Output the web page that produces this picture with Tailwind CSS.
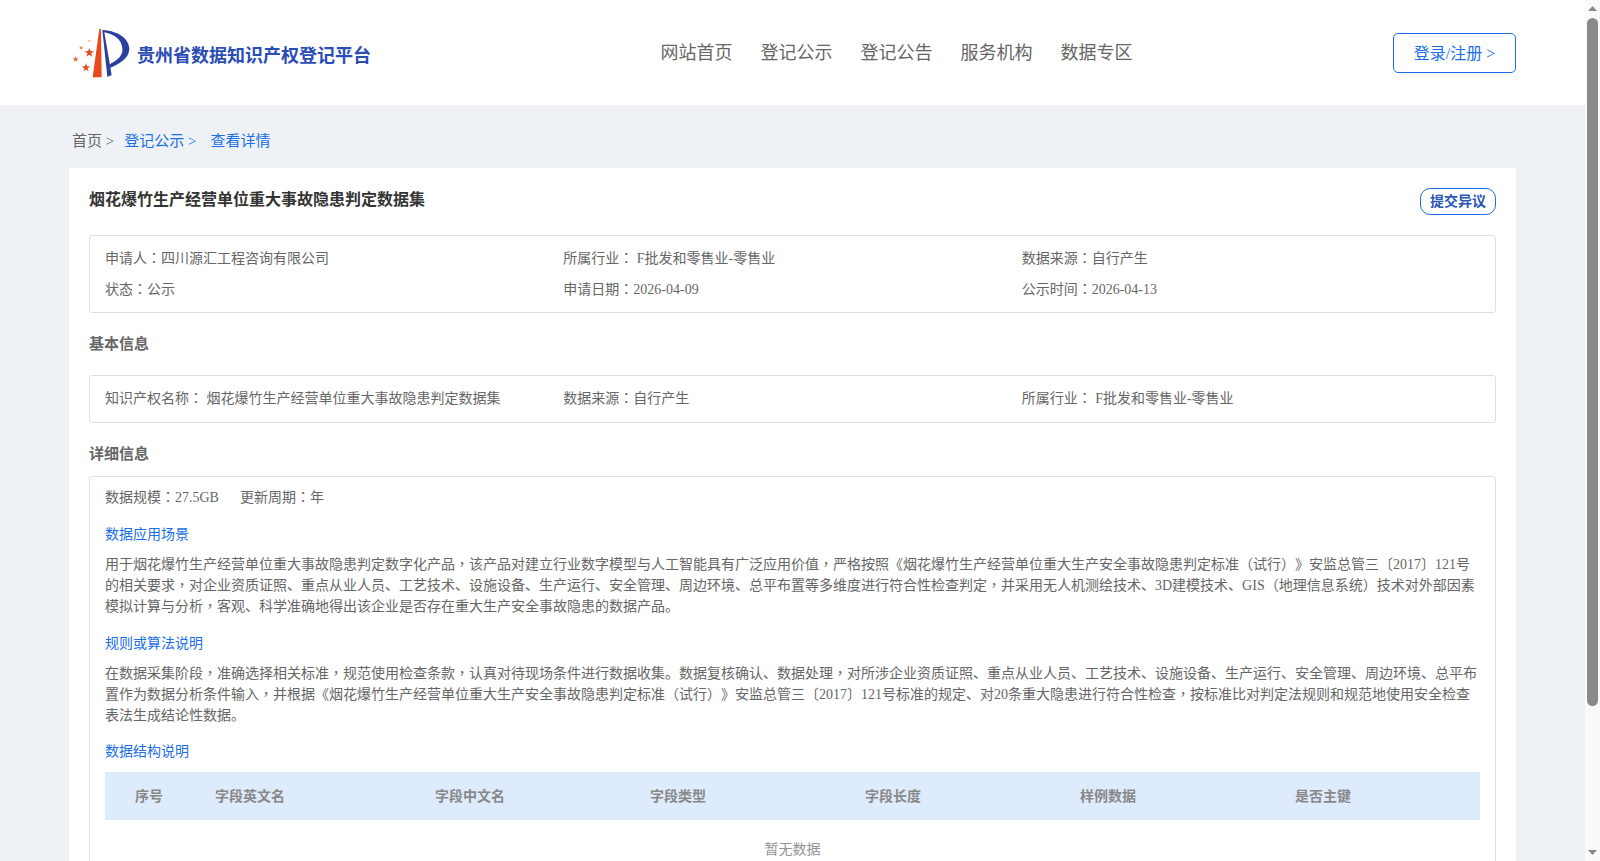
<!DOCTYPE html>
<html lang="zh-CN">
<head>
  <meta charset="UTF-8" />
  <meta name="viewport" content="width=device-width, initial-scale=1.0"/>
  <title>烟花爆竹生产经营单位重大事故隐患判定数据集</title>
  <script src="https://cdn.jsdelivr.net/npm/@tailwindcss/browser@4"></script>
</head>
<body class="h-screen overflow-hidden flex bg-white text-[14px] text-[#666] font-['Liberation_Serif','Noto_Sans_CJK_SC',serif] [text-spacing-trim:space-all]">

  <div class="flex-1 min-w-0 h-full overflow-hidden bg-[#eef2f6]">
    <!-- 顶部导航 -->
    <header class="h-[105px] bg-white flex items-center justify-between pl-[70px] pr-[69px]">
      <a class="flex items-center w-[302px]">
        <svg class="w-[65px] h-[55px] shrink-0" viewBox="0 0 195 165">
          <polygon points="68,157 88,12 93,12 95,157" fill="#e8491c"/>
          <path d="M97 15 C150 18 178 45 178 72 C178 100 145 118 118 130 L117 119 C145 105 160 90 157 70 C155 45 135 28 103 22 L125 150 L112 156 Z" fill="#2a3f9e"/>
          <polygon points="58,68 61.5,78.1 72.3,78.4 63.7,84.9 66.8,95.1 58,89 49.2,95.1 52.3,84.9 43.7,78.4 54.5,78.1" fill="#e8491c"/>
          <polygon points="48,115 51.1,123.8 60.4,124 52.9,129.6 55.6,138.5 48,133.2 40.4,138.5 43.1,129.6 35.6,124 45,123.8" fill="#e8491c"/>
          <polygon points="17,94 19.1,100.1 25.6,100.2 20.4,104.1 22.3,110.3 17,106.6 11.7,110.3 13.6,104.1 8.4,100.2 14.9,100.1" fill="#ee5a2c"/>
          <circle cx="33" cy="68" r="4.5" fill="#ee8a60"/>
          <circle cx="58" cy="47" r="2.8" fill="#f0a080"/>
        </svg>
        <span class="ml-[2px] pt-[8px] text-[18px] font-bold text-[#2a4db5] whitespace-nowrap">贵州省数据知识产权登记平台</span>
      </a>
      <nav class="flex gap-[28px] text-[18px] text-[#666] ml-[28px] mt-[1px]">
        <a>网站首页</a><a>登记公示</a><a>登记公告</a><a>服务机构</a><a>数据专区</a>
      </nav>
      <a class="w-[123px] h-[40px] pt-[2px] flex items-center justify-center border border-[#1a6fe8] rounded-[5px] text-[16px] text-[#1a6fe8] bg-white">登录/注册 &gt;</a>
    </header>

    <main class="px-[69px]">
      <!-- 面包屑 -->
      <div class="h-[63px] flex items-center text-[15px] pl-[3px] pt-[9px]">
        <span class="text-[#666]">首页 &gt;</span>
        <span class="ml-[10px] text-[#1a6fe8]">登记公示 &gt;</span>
        <span class="ml-[14px] text-[#1a6fe8]">查看详情</span>
      </div>

      <section class="bg-white px-[20px] pt-[20px] pb-[40px]">
        <div class="flex items-start justify-between h-[47px]">
          <h1 class="text-[16px] leading-[24px] font-bold text-[#333]">烟花爆竹生产经营单位重大事故隐患判定数据集</h1>
          <button class="w-[76px] h-[27px] rounded-[10px] border border-[#1a6fe8] text-[14px] font-bold text-[#2a56b5] leading-none">提交异议</button>
        </div>

        <div class="border border-[#dcdfe6] rounded-[3px] h-[78px] px-[15px] pt-[7px] grid grid-cols-3 auto-rows-[31px] items-center">
          <div>申请人<span lang="zh-TW" class="font-['Liberation_Serif','Noto_Sans_CJK_TC',serif]">：</span>四川源汇工程咨询有限公司</div>
          <div>所属行业<span lang="zh-TW" class="font-['Liberation_Serif','Noto_Sans_CJK_TC',serif]">：</span> F批发和零售业-零售业</div>
          <div>数据来源<span lang="zh-TW" class="font-['Liberation_Serif','Noto_Sans_CJK_TC',serif]">：</span>自行产生</div>
          <div>状态<span lang="zh-TW" class="font-['Liberation_Serif','Noto_Sans_CJK_TC',serif]">：</span>公示</div>
          <div>申请日期<span lang="zh-TW" class="font-['Liberation_Serif','Noto_Sans_CJK_TC',serif]">：</span>2026-04-09</div>
          <div>公示时间<span lang="zh-TW" class="font-['Liberation_Serif','Noto_Sans_CJK_TC',serif]">：</span>2026-04-13</div>
        </div>

        <h2 class="mt-[19px] mb-[19px] text-[15px] leading-[24px] font-bold text-[#666]">基本信息</h2>

        <div class="border border-[#dcdfe6] rounded-[3px] h-[48px] px-[15px] pb-[2px] grid grid-cols-3 items-center">
          <div>知识产权名称<span lang="zh-TW" class="font-['Liberation_Serif','Noto_Sans_CJK_TC',serif]">：</span> 烟花爆竹生产经营单位重大事故隐患判定数据集</div>
          <div>数据来源<span lang="zh-TW" class="font-['Liberation_Serif','Noto_Sans_CJK_TC',serif]">：</span>自行产生</div>
          <div>所属行业<span lang="zh-TW" class="font-['Liberation_Serif','Noto_Sans_CJK_TC',serif]">：</span> F批发和零售业-零售业</div>
        </div>

        <h2 class="mt-[19px] mb-[10px] text-[15px] leading-[24px] font-bold text-[#666]">详细信息</h2>

        <div class="border border-[#dcdfe6] rounded-[3px] px-[15px] pt-[10px] pb-[20px]">
          <div class="leading-[21px]"><span>数据规模<span lang="zh-TW" class="font-['Liberation_Serif','Noto_Sans_CJK_TC',serif]">：</span>27.5GB</span><span class="ml-[21px]">更新周期<span lang="zh-TW" class="font-['Liberation_Serif','Noto_Sans_CJK_TC',serif]">：</span>年</span></div>

          <h3 class="mt-[16px] mb-[9px] leading-[21px] font-normal text-[#1a6fe8]">数据应用场景</h3>
          <p class="leading-[21px]">用于烟花爆竹生产经营单位重大事故隐患判定数字化产品<span lang="zh-TW" class="font-['Liberation_Serif','Noto_Sans_CJK_TC',serif]">，</span>该产品对建立行业数字模型与人工智能具有广泛应用价值<span lang="zh-TW" class="font-['Liberation_Serif','Noto_Sans_CJK_TC',serif]">，</span>严格按照《烟花爆竹生产经营单位重大生产安全事故隐患判定标准（试行）》安监总管三〔2017〕121号的相关要求<span lang="zh-TW" class="font-['Liberation_Serif','Noto_Sans_CJK_TC',serif]">，</span>对企业资质证照、重点从业人员、工艺技术、设施设备、生产运行、安全管理、周边环境、总平布置等多维度进行符合性检查判定<span lang="zh-TW" class="font-['Liberation_Serif','Noto_Sans_CJK_TC',serif]">，</span>并采用无人机测绘技术、3D建模技术、GIS（地理信息系统）技术对外部因素模拟计算与分析<span lang="zh-TW" class="font-['Liberation_Serif','Noto_Sans_CJK_TC',serif]">，</span>客观、科学准确地得出该企业是否存在重大生产安全事故隐患的数据产品。</p>

          <h3 class="mt-[16px] mb-[9px] leading-[21px] font-normal text-[#1a6fe8]">规则或算法说明</h3>
          <p class="leading-[21px]">在数据采集阶段<span lang="zh-TW" class="font-['Liberation_Serif','Noto_Sans_CJK_TC',serif]">，</span>准确选择相关标准<span lang="zh-TW" class="font-['Liberation_Serif','Noto_Sans_CJK_TC',serif]">，</span>规范使用检查条款<span lang="zh-TW" class="font-['Liberation_Serif','Noto_Sans_CJK_TC',serif]">，</span>认真对待现场条件进行数据收集。数据复核确认、数据处理<span lang="zh-TW" class="font-['Liberation_Serif','Noto_Sans_CJK_TC',serif]">，</span>对所涉企业资质证照、重点从业人员、工艺技术、设施设备、生产运行、安全管理、周边环境、总平布置作为数据分析条件输入<span lang="zh-TW" class="font-['Liberation_Serif','Noto_Sans_CJK_TC',serif]">，</span>并根据《烟花爆竹生产经营单位重大生产安全事故隐患判定标准（试行）》安监总管三〔2017〕121号标准的规定、对20条重大隐患进行符合性检查<span lang="zh-TW" class="font-['Liberation_Serif','Noto_Sans_CJK_TC',serif]">，</span>按标准比对判定法规则和规范地使用安全检查表法生成结论性数据。</p>

          <h3 class="mt-[15px] mb-[10px] leading-[21px] font-normal text-[#1a6fe8]">数据结构说明</h3>
          <table class="w-full table-fixed">
            <thead class="bg-[#deebfc] text-[#888]">
              <tr class="h-[48px] text-left font-bold">
                <th class="w-[88px] text-center">序号</th>
                <th class="w-[242px] pl-[22px]">字段英文名</th>
                <th class="w-[215px]">字段中文名</th>
                <th class="w-[215px]">字段类型</th>
                <th class="w-[215px]">字段长度</th>
                <th class="w-[215px]">样例数据</th>
                <th>是否主键</th>
              </tr>
            </thead>
            <tbody>
              <tr><td colspan="7" class="h-[58px] text-center text-[#909399]">暂无数据</td></tr>
            </tbody>
          </table>
        </div>
      </section>
    </main>
  </div>

  <!-- 滚动条 -->
  <aside class="w-[15px] h-full shrink-0 bg-[#fafafa] flex flex-col items-center">
    <svg class="w-[15px] h-[17px] shrink-0" viewBox="0 0 15 17"><polygon points="3,11 12,11 7.5,6" fill="#8a8a8a"/></svg>
    <div class="w-[11px] h-[688px] rounded-[6px] bg-[#8a8a8a] mt-[1px]"></div>
    <svg class="w-[15px] h-[17px] shrink-0 mt-auto" viewBox="0 0 15 17"><polygon points="3,6 12,6 7.5,11" fill="#8a8a8a"/></svg>
  </aside>

</body>
</html>
